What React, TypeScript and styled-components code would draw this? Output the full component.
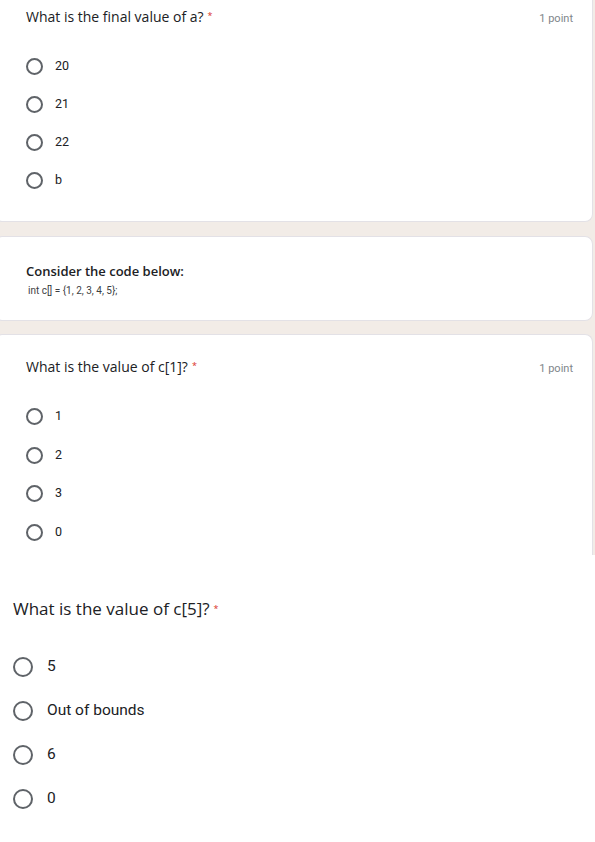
import React from "react";
import styled, { createGlobalStyle } from "styled-components";

const GlobalStyle = createGlobalStyle`
  html, body {
    margin: 0;
    padding: 0;
    background: #ffffff;
  }
  body {
    font-family: Roboto, "Liberation Sans", Arial, sans-serif;
  }
`;

const Page = styled.div`
  width: 595px;
  height: 842px;
  overflow: hidden;
  background: #f2ece7;
  display: flex;
  flex-direction: column;
`;

const Card = styled.div<{ $h: number; $cut?: boolean; $top?: boolean }>`
  box-sizing: border-box;
  height: ${({ $h }) => $h}px;
  margin-left: -6px;
  margin-right: 2px;
  background: #ffffff;
  border: 1px solid #e3e1e6;
  border-left-width: 2px;
  border-radius: ${({ $cut, $top }) =>
    $top ? "0 0 8px 8px" : $cut ? "8px 8px 0 0" : "8px"};
  ${({ $cut }) => ($cut ? "border-bottom: none;" : "")}
  ${({ $top }) => ($top ? "border-top: none;" : "")}
  padding: 0 19px 0 30px;
  display: flex;
  flex-direction: column;
`;

const Gap = styled.div<{ $h: number }>`
  height: ${({ $h }) => $h}px;
  flex: none;
`;

const Header = styled.div<{ $pt: number }>`
  display: flex;
  justify-content: space-between;
  align-items: baseline;
  padding-top: ${({ $pt }) => $pt}px;
`;

const Question = styled.div<{ $size: number }>`
  font-family: "Open Sans", Lato, sans-serif;
  font-size: ${({ $size }) => $size}px;
  line-height: 1.3;
  color: #202124;
`;

const Required = styled.span`
  color: #d93025;
  font-size: 9px;
  margin-left: 4px;
  vertical-align: 3px;
`;

const Points = styled.div`
  font-family: Roboto, sans-serif;
  font-size: 11px;
  color: #80868b;
`;

const Options = styled.div<{ $pt: number; $gap: number }>`
  display: flex;
  flex-direction: column;
  gap: ${({ $gap }) => $gap}px;
  padding-top: ${({ $pt }) => $pt}px;
`;

const Option = styled.div<{ $gap: number }>`
  display: flex;
  align-items: center;
  gap: ${({ $gap }) => $gap}px;
`;

const Radio = styled.span<{ $d: number }>`
  box-sizing: border-box;
  width: ${({ $d }) => $d}px;
  height: ${({ $d }) => $d}px;
  border: 2px solid #5f6368;
  border-radius: 50%;
  flex: none;
`;

const OptionText = styled.span<{ $size: number }>`
  font-family: Roboto, sans-serif;
  font-size: ${({ $size }) => $size}px;
  color: #202124;
  line-height: 1;
`;

const Title = styled.div`
  font-family: "Open Sans", Lato, sans-serif;
  font-size: 13px;
  font-weight: 600;
  color: #202124;
  padding-top: 25px;
`;

const Code = styled.div`
  font-family: Roboto, sans-serif;
  font-size: 10px;
  color: #3c4043;
  padding-top: 5px;
  padding-left: 2px;
`;

const Bottom = styled.div`
  flex: 1;
  background: #ffffff;
  padding: 0 0 0 13px;
  display: flex;
  flex-direction: column;
`;

type Q = {
  text: string;
  options: string[];
};

const q1: Q = { text: "What is the final value of a?", options: ["20", "21", "22", "b"] };
const q3: Q = { text: "What is the value of c[1]?", options: ["1", "2", "3", "0"] };
const q4: Q = { text: "What is the value of c[5]?", options: ["5", "Out of bounds", "6", "0"] };

const OptionList = ({
  options,
  pt,
  gap,
  d,
  size,
  textGap,
}: {
  options: string[];
  pt: number;
  gap: number;
  d: number;
  size: number;
  textGap: number;
}) => (
  <Options $pt={pt} $gap={gap}>
    {options.map((o) => (
      <Option key={o} $gap={textGap}>
        <Radio $d={d} />
        <OptionText $size={size}>{o}</OptionText>
      </Option>
    ))}
  </Options>
);

export default function App() {
  return (
    <>
      <GlobalStyle />
      <Page>
        <Card $h={222} $top>
          <Header $pt={8}>
            <Question $size={14}>
              {q1.text}
              <Required>*</Required>
            </Question>
            <Points>1 point</Points>
          </Header>
          <OptionList options={q1.options} pt={32} gap={21} d={17} size={12.5} textGap={12} />
        </Card>
        <Gap $h={14} />
        <Card $h={85}>
          <Title>Consider the code below:</Title>
          <Code>int c[] = {"{1, 2, 3, 4, 5};"}</Code>
        </Card>
        <Gap $h={13} />
        <Card $h={221} $cut>
          <Header $pt={23}>
            <Question $size={14}>
              {q3.text}
              <Required>*</Required>
            </Question>
            <Points>1 point</Points>
          </Header>
          <OptionList options={q3.options} pt={32} gap={21.5} d={17} size={12.5} textGap={12} />
        </Card>
        <Bottom>
          <Header $pt={43}>
            <Question $size={17}>
              {q4.text}
              <Required>*</Required>
            </Question>
          </Header>
          <OptionList options={q4.options} pt={37} gap={24} d={20} size={15.5} textGap={14} />
        </Bottom>
      </Page>
    </>
  );
}
